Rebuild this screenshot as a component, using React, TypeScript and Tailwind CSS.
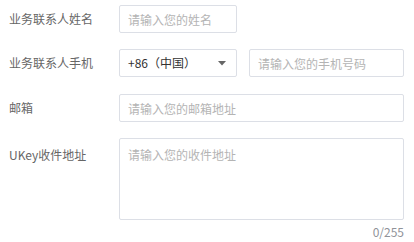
import { useState } from "react";

const font = "font-['Noto_Sans_CJK_SC','Noto_Sans',sans-serif]";

function Label({ children, top = false }: { children: React.ReactNode; top?: boolean }) {
  return (
    <div
      className={`w-[110px] shrink-0 pl-[9px] text-[12px] text-[#666] ${
        top ? "pt-[8px] leading-[18px]" : "leading-[28px]"
      }`}
    >
      {children}
    </div>
  );
}

function TextInput({ placeholder, className = "" }: { placeholder: string; className?: string }) {
  return (
    <input
      placeholder={placeholder}
      className={`h-[28px] rounded-[2px] border border-[#dcdfe6] bg-white px-[8px] text-[12px] text-[#333] outline-none placeholder:text-[#b4b4b4] ${className}`}
    />
  );
}

export default function App() {
  const [address, setAddress] = useState("");

  return (
    <div className={`w-[414px] h-[242px] bg-white ${font}`}>
      <div className="flex flex-col pt-[5px]">
        <div className="flex">
          <Label>业务联系人姓名</Label>
          <TextInput placeholder="请输入您的姓名" className="ml-[9px] w-[118px]" />
        </div>

        <div className="mt-[16px] flex">
          <Label>业务联系人手机</Label>
          <div className="ml-[9px] flex h-[28px] w-[118px] items-center justify-between rounded-[2px] border border-[#dcdfe6] pl-[8px] pr-[10px] text-[12px] text-[#333]">
            <span>+86（中国）</span>
            <svg width="8" height="5" viewBox="0 0 8 5">
              <path d="M0 0h8L4 4.5z" fill="#666" />
            </svg>
          </div>
          <TextInput placeholder="请输入您的手机号码" className="ml-[12px] w-[155px]" />
        </div>

        <div className="mt-[17px] flex">
          <Label>邮箱</Label>
          <TextInput placeholder="请输入您的邮箱地址" className="ml-[9px] w-[285px]" />
        </div>

        <div className="mt-[16px] flex">
          <Label top>UKey收件地址</Label>
          <div className="ml-[9px] flex w-[285px] flex-col">
            <textarea
              value={address}
              onChange={(e) => setAddress(e.target.value)}
              maxLength={255}
              placeholder="请输入您的收件地址"
              className="h-[82px] resize-none rounded-[2px] border border-[#dcdfe6] px-[8px] py-[7px] text-[12px] leading-[18px] text-[#333] outline-none placeholder:text-[#b4b4b4]"
            />
            <div className="mt-[4px] text-right text-[12px] leading-[16px] text-[#909399]">
              {address.length}/255
            </div>
          </div>
        </div>
      </div>
    </div>
  );
}
